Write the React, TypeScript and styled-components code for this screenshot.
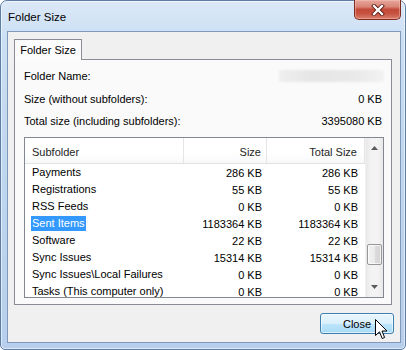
import React from 'react'
import styled, { createGlobalStyle } from 'styled-components'

const GlobalStyle = createGlobalStyle`
  html, body {
    margin: 0;
    padding: 0;
    background: #ffffff;
  }
  body {
    font-family: 'Liberation Sans', Arial, sans-serif;
    font-size: 11px;
    color: #000;
  }
  * {
    box-sizing: border-box;
  }
`

const Window = styled.div`
  position: relative;
  width: 406px;
  height: 350px;
  display: flex;
  flex-direction: column;
  padding: 0 4px 6px 6px;
  border: 1px solid #5f7ea6;
  border-radius: 7px 7px 5px 5px;
  background: linear-gradient(180deg, #dbe8f7 0%, #cadff4 12%, #c0d7f0 45%, #b7cfec 100%);
  box-shadow: inset 0 0 0 1px rgba(255, 255, 255, 0.55);
`

const TitleBar = styled.div`
  height: 30px;
  display: flex;
  align-items: flex-start;
  justify-content: space-between;
`

const Title = styled.div`
  padding: 10px 0 0 1px;
  font-size: 11.5px;
  color: #000;
`

const CloseCaption = styled.div`
  width: 47px;
  height: 20px;
  margin-top: -1px;
  display: flex;
  align-items: center;
  justify-content: center;
  border: 1px solid #7d2a20;
  border-top: none;
  border-radius: 0 0 5px 5px;
  background: linear-gradient(
    180deg,
    #e6a79c 0%,
    #d98678 35%,
    #c44a39 50%,
    #c6513f 70%,
    #d9806c 100%
  );
  box-shadow: inset 0 0 0 1px rgba(255, 200, 190, 0.45);
`

const Client = styled.div`
  flex: 1;
  display: flex;
  flex-direction: column;
  padding: 7px 8px 7px 6px;
  border: 1px solid #8199b8;
  background: #f0f0f0;
`

const TabStrip = styled.div`
  display: flex;
  height: 20px;
`

const Tab = styled.div`
  width: 68px;
  height: 21px;
  display: flex;
  align-items: center;
  justify-content: center;
  border: 1px solid #898c95;
  border-bottom: none;
  background: #fcfcfc;
  position: relative;
  z-index: 1;
`

const Panel = styled.div`
  height: 246px;
  display: flex;
  flex-direction: column;
  padding: 4px 7px 6px 9px;
  border: 1px solid #898c95;
  background: #fafafa;
`

const InfoRow = styled.div<{ $h: number }>`
  height: ${(p) => p.$h}px;
  display: flex;
  align-items: center;
  justify-content: space-between;
  padding-right: 2px;
`

const BlurredName = styled.div`
  width: 105px;
  height: 12px;
  margin-right: -2px;
  background: linear-gradient(90deg, #efefef 0%, #e6e6e6 30%, #e9e9e9 70%, #f2f2f2 100%);
  filter: blur(0.8px);
`

const List = styled.div`
  margin-top: 5px;
  height: 161px;
  display: flex;
  border: 1px solid #828790;
  background: #ffffff;
  overflow: hidden;
`

const ListBody = styled.div`
  flex: 1;
  display: flex;
  flex-direction: column;
  overflow: hidden;
`

const Row = styled.div`
  display: grid;
  grid-template-columns: 159px 83px 98px;
  height: 17px;
  flex: none;
`

const HeaderRow = styled(Row)`
  height: 26px;
  border-bottom: 1px solid #e2e2e2;
  background: linear-gradient(180deg, #ffffff 0%, #ffffff 60%, #f7f8fa 100%);
`

const HeadCell = styled.div<{ $right?: boolean; $pad: number }>`
  display: flex;
  align-items: center;
  justify-content: ${(p) => (p.$right ? 'flex-end' : 'flex-start')};
  padding: ${(p) => (p.$right ? `0 ${p.$pad}px 0 0` : `0 0 0 ${p.$pad}px`)};
  border-right: 1px solid #e5e5e5;
  color: #1e1e1e;
  padding-top: 2px;
`

const Cell = styled.div<{ $right?: boolean; $pad: number }>`
  display: flex;
  align-items: center;
  justify-content: ${(p) => (p.$right ? 'flex-end' : 'flex-start')};
  padding: ${(p) => (p.$right ? `0 ${p.$pad}px 0 0` : `0 0 0 ${p.$pad - 1}px`)};
  white-space: nowrap;
  overflow: hidden;
`

const Name = styled.span<{ $selected?: boolean }>`
  padding: 1px 1px 2px;
  background: ${(p) => (p.$selected ? '#3399ff' : 'transparent')};
  color: ${(p) => (p.$selected ? '#ffffff' : '#000000')};
`

const ScrollBar = styled.div`
  width: 18px;
  display: flex;
  flex-direction: column;
  background: linear-gradient(90deg, #e8e8e8 0%, #f3f3f3 30%, #f3f3f3 70%, #e8e8e8 100%);
  border-left: 1px solid #f0f0f0;
`

const ScrollButton = styled.div`
  height: 20px;
  display: flex;
  align-items: center;
  justify-content: center;
`

const Track = styled.div`
  flex: 1;
  padding: 0 1px;
`

const Thumb = styled.div<{ $top: number }>`
  margin-top: ${(p) => p.$top}px;
  height: 21px;
  border: 1px solid #979797;
  border-radius: 2px;
  background: linear-gradient(90deg, #f2f2f2 0%, #eaeaea 50%, #dcdcdc 51%, #d4d4d4 100%);
  box-shadow: inset 0 0 0 1px rgba(255, 255, 255, 0.7);
`

const Footer = styled.div`
  position: relative;
  display: flex;
  justify-content: flex-end;
  margin: 8px -2px 0 0;
`

const Button = styled.div`
  width: 74px;
  height: 21px;
  display: flex;
  align-items: center;
  justify-content: center;
  border: 1px solid #3c7fb1;
  border-radius: 3px;
  background: linear-gradient(180deg, #eaf6fd 0%, #d9f0fc 50%, #bee6fd 51%, #a7d9f5 100%);
  box-shadow: inset 0 0 0 1px rgba(255, 255, 255, 0.6);
`

const Cursor = styled.svg`
  position: absolute;
  left: 361px;
  top: 6px;
`

type Entry = { name: string; size: string; total: string; selected?: boolean }

const entries: Entry[] = [
  { name: 'Payments', size: '286 KB', total: '286 KB' },
  { name: 'Registrations', size: '55 KB', total: '55 KB' },
  { name: 'RSS Feeds', size: '0 KB', total: '0 KB' },
  { name: 'Sent Items', size: '1183364 KB', total: '1183364 KB', selected: true },
  { name: 'Software', size: '22 KB', total: '22 KB' },
  { name: 'Sync Issues', size: '15314 KB', total: '15314 KB' },
  { name: 'Sync Issues\\Local Failures', size: '0 KB', total: '0 KB' },
  { name: 'Tasks (This computer only)', size: '0 KB', total: '0 KB' },
]

function Arrow({ up }: { up?: boolean }) {
  return (
    <svg width="7" height="4" viewBox="0 0 7 4">
      <path d={up ? 'M0 4 L3.5 0 L7 4 Z' : 'M0 0 L3.5 4 L7 0 Z'} fill="#5b5b5b" />
    </svg>
  )
}

export default function App() {
  return (
    <>
      <GlobalStyle />
      <Window>
        <TitleBar>
          <Title>Folder Size</Title>
          <CloseCaption>
            <svg width="14" height="12" viewBox="0 0 14 12">
              <path d="M3 2 L11 10 M11 2 L3 10" stroke="#5a1a12" strokeWidth="4" strokeLinecap="square" />
              <path d="M3 2 L11 10 M11 2 L3 10" stroke="#ffffff" strokeWidth="2.3" strokeLinecap="square" />
            </svg>
          </CloseCaption>
        </TitleBar>
        <Client>
          <TabStrip>
            <Tab>Folder Size</Tab>
          </TabStrip>
          <Panel>
            <InfoRow $h={24}>
              <span>Folder Name:</span>
              <BlurredName />
            </InfoRow>
            <InfoRow $h={22}>
              <span>Size (without subfolders):</span>
              <span>0 KB</span>
            </InfoRow>
            <InfoRow $h={22}>
              <span>Total size (including subfolders):</span>
              <span>3395080 KB</span>
            </InfoRow>
            <List>
              <ListBody>
                <HeaderRow>
                  <HeadCell $pad={7}>Subfolder</HeadCell>
                  <HeadCell $right $pad={5}>Size</HeadCell>
                  <HeadCell $right $pad={7}>Total Size</HeadCell>
                </HeaderRow>
                {entries.map((e) => (
                  <Row key={e.name}>
                    <Cell $pad={7}>
                      <Name $selected={e.selected}>{e.name}</Name>
                    </Cell>
                    <Cell $right $pad={5}>{e.size}</Cell>
                    <Cell $right $pad={7}>{e.total}</Cell>
                  </Row>
                ))}
              </ListBody>
              <ScrollBar>
                <ScrollButton>
                  <Arrow up />
                </ScrollButton>
                <Track>
                  <Thumb $top={86} />
                </Track>
                <ScrollButton>
                  <Arrow />
                </ScrollButton>
              </ScrollBar>
            </List>
          </Panel>
          <Footer>
            <Button>Close</Button>
            <Cursor width="13" height="21" viewBox="0 0 13 21">
              <path
                d="M0.5 0.5 L0.5 16.5 L4.5 12.8 L7.2 19.5 L9.6 18.5 L7 12 L12 12 Z"
                fill="#ffffff"
                stroke="#000000"
                strokeWidth="1"
                strokeLinejoin="miter"
              />
            </Cursor>
          </Footer>
        </Client>
      </Window>
    </>
  )
}
